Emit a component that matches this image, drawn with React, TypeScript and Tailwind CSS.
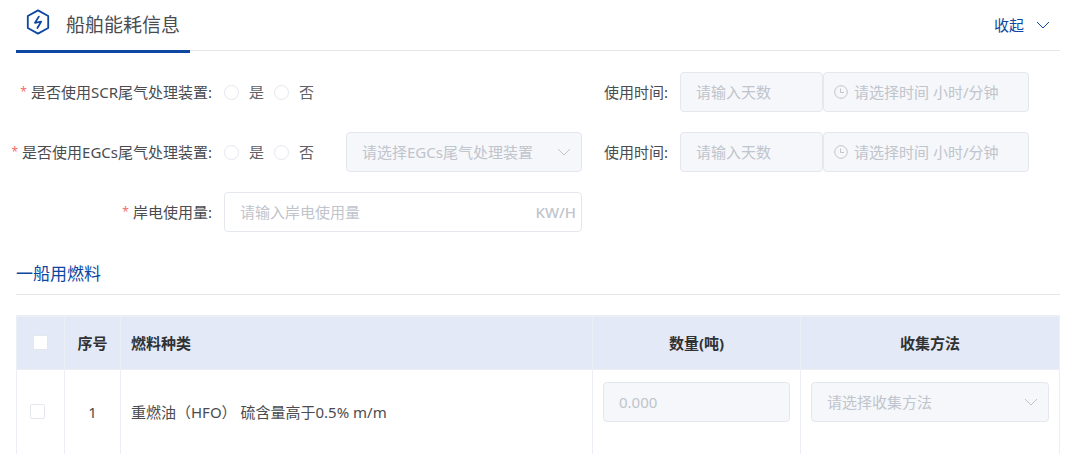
import { useState } from "react";
import type { ReactNode } from "react";
import clsx from "clsx";

const CONTROL =
  "block h-10 w-full rounded-sm border border-[#e4e7ed] text-[15px] leading-5 placeholder:text-[#c0c4cc] focus:outline-none focus:border-[#0d47a1]";
const DISABLED = "bg-[#f5f7fa] text-[#c0c4cc] cursor-not-allowed";

const FUELS = [{ id: 1, name: "重燃油（HFO） 硫含量高于0.5% m/m" }];

function Chevron({ className }: { className?: string }) {
  return (
    <svg
      viewBox="0 0 14 14"
      fill="none"
      stroke="currentColor"
      strokeLinecap="round"
      strokeLinejoin="round"
      className={className}
      aria-hidden="true"
    >
      <path d="M1.3 4.3 L7 10 L12.7 4.3" />
    </svg>
  );
}

function EnergyIcon() {
  return (
    <svg
      viewBox="0 0 24 26"
      fill="none"
      stroke="currentColor"
      strokeWidth="1.8"
      strokeLinejoin="round"
      strokeLinecap="round"
      className="mb-1.5 h-[26px] w-6 text-[#0d47a1]"
      aria-hidden="true"
    >
      <path d="M12 1.4 L22.2 7 V19 L12 24.6 L1.8 19 V7 Z" />
      <path d="M12.8 7.6 L9 13.8 L15.2 12.6 L11.4 19" />
    </svg>
  );
}

function ClockIcon() {
  return (
    <svg
      viewBox="0 0 14 14"
      fill="none"
      stroke="currentColor"
      className="pointer-events-none absolute left-[11px] top-[13px] size-3.5 text-[#c0c4cc]"
      aria-hidden="true"
    >
      <circle cx="7" cy="7" r="6.3" />
      <path d="M6.5 3.5 V7.5 H10" />
    </svg>
  );
}

function DisabledSelect({ label, placeholder }: { label: string; placeholder: string }) {
  return (
    <div className="relative w-full">
      <select
        aria-label={label}
        disabled
        className={clsx(CONTROL, DISABLED, "appearance-none pl-[15px] pr-9")}
      >
        <option>{placeholder}</option>
      </select>
      <Chevron className="pointer-events-none absolute right-[11px] top-[13px] size-3.5 text-[#c0c4cc]" />
    </div>
  );
}

function FieldLabel({ htmlFor, children }: { htmlFor?: string; children: ReactNode }) {
  return (
    <label
      htmlFor={htmlFor}
      className="flex w-[196px] shrink-0 justify-end gap-1 whitespace-nowrap"
    >
      <span className="text-xs leading-5 text-[#f56c6c]">*</span>
      <span>{children}</span>
    </label>
  );
}

function YesNo({ name }: { name: string }) {
  return (
    <div className="flex shrink-0 items-center gap-2.5 text-[#606266]">
      {["是", "否"].map((option) => (
        <label key={option} className="flex items-center gap-2.5">
          <input
            type="radio"
            name={name}
            value={option}
            className="size-[15px] appearance-none rounded-full border border-[#e4e7ed] bg-white checked:border-4 checked:border-[#0d47a1]"
          />
          {option}
        </label>
      ))}
    </div>
  );
}

function UsageTime({ id }: { id: string }) {
  return (
    <div className="flex items-center">
      <label htmlFor={id} className="mr-3 w-[86px] shrink-0 text-right">
        使用时间:
      </label>
      <div className="grid flex-1 grid-cols-[143fr_206fr]">
        <input
          id={id}
          disabled
          placeholder="请输入天数"
          className={clsx(CONTROL, DISABLED, "px-[15px]")}
        />
        <div className="relative">
          <ClockIcon />
          <input
            aria-label="小时/分钟"
            disabled
            placeholder="请选择时间 小时/分钟"
            className={clsx(CONTROL, DISABLED, "pl-[30px] pr-2")}
          />
        </div>
      </div>
    </div>
  );
}

function Checkbox({ label, className }: { label: string; className?: string }) {
  return (
    <input
      type="checkbox"
      aria-label={label}
      className={clsx(
        "block size-[15px] appearance-none rounded-xs border border-[#e4e7ed] bg-white checked:bg-[#0d47a1]",
        className,
      )}
    />
  );
}

function FuelTable() {
  return (
    <table className="mt-5 w-full table-fixed border-collapse border border-[#ebeef5] border-t-2">
      <colgroup>
        <col className="w-12" />
        <col className="w-14" />
        <col />
        <col className="w-52" />
        <col className="w-[259px]" />
      </colgroup>
      <thead>
        <tr className="h-[53px] bg-[#e4e9f7] text-[#303133]">
          <th className="border border-[#ebeef5] border-t-2">
            <Checkbox label="全选" className="mx-auto" />
          </th>
          <th className="border border-[#ebeef5] border-t-2">序号</th>
          <th className="border border-[#ebeef5] border-t-2 px-2.5 text-left">燃料种类</th>
          <th className="border border-[#ebeef5] border-t-2">数量(吨)</th>
          <th className="border border-[#ebeef5] border-t-2">收集方法</th>
        </tr>
      </thead>
      <tbody>
        {FUELS.map((fuel) => (
          <tr key={fuel.id}>
            <td className="border border-[#ebeef5] pl-[13px]">
              <Checkbox label={fuel.name} />
            </td>
            <td className="border border-[#ebeef5] text-center">{fuel.id}</td>
            <td className="border border-[#ebeef5] px-2.5">{fuel.name}</td>
            <td className="border border-[#ebeef5] px-2.5 pb-8 pt-3">
              <input
                aria-label="数量(吨)"
                disabled
                placeholder="0.000"
                className={clsx(CONTROL, DISABLED, "px-[15px]")}
              />
            </td>
            <td className="border border-[#ebeef5] px-2.5 pb-8 pt-3">
              <DisabledSelect label="收集方法" placeholder="请选择收集方法" />
            </td>
          </tr>
        ))}
      </tbody>
    </table>
  );
}

function App() {
  const [open, setOpen] = useState(true);

  return (
    <main className="overflow-hidden bg-white pl-4 pr-5 font-['Noto_Sans','Noto_Sans_CJK_SC',sans-serif] text-[15px] leading-5 text-[#4a4c50]">
      <header className="flex h-[51px] items-start justify-between border-b border-[#e6e6e6]">
        <div className="flex h-[53px] w-[174px] items-center gap-4 border-b-3 border-[#0d47a1] pl-2.5">
          <EnergyIcon />
          <h1 className="whitespace-nowrap text-[19px] leading-6">船舶能耗信息</h1>
        </div>
        <button
          type="button"
          onClick={() => setOpen(!open)}
          className="flex h-[50px] items-center gap-3 pr-2.5 text-[#0d47a1]"
        >
          收起
          <Chevron className={clsx("size-3.5", !open && "rotate-180")} />
        </button>
      </header>

      {open && (
        <>
          <form className="mt-[21px] grid grid-cols-[566fr_447fr] gap-y-5 pr-[31px]">
            <div className="flex h-10 items-center gap-3">
              <FieldLabel>是否使用SCR尾气处理装置:</FieldLabel>
              <YesNo name="scr" />
            </div>
            <UsageTime id="scr-days" />

            <div className="flex items-center gap-3">
              <FieldLabel>是否使用EGCs尾气处理装置:</FieldLabel>
              <YesNo name="egcs" />
              <div className="flex-1 pl-5">
                <DisabledSelect label="EGCs尾气处理装置" placeholder="请选择EGCs尾气处理装置" />
              </div>
            </div>
            <UsageTime id="egcs-days" />

            <div className="flex items-center gap-3">
              <FieldLabel htmlFor="shore-power">岸电使用量:</FieldLabel>
              <div className="relative flex-1">
                <input
                  id="shore-power"
                  placeholder="请输入岸电使用量"
                  className={clsx(CONTROL, "bg-white pl-[15px] pr-14")}
                />
                <span className="absolute right-1.5 top-2.5 font-medium text-[#c0c4cc]">KW/H</span>
              </div>
            </div>
          </form>

          <h2 className="mt-[30px] border-b border-[#e6e6e6] pb-2 text-[17px] leading-6 text-[#0d47a1]">
            一船用燃料
          </h2>
          <FuelTable />
        </>
      )}
    </main>
  );
}

export default App;
